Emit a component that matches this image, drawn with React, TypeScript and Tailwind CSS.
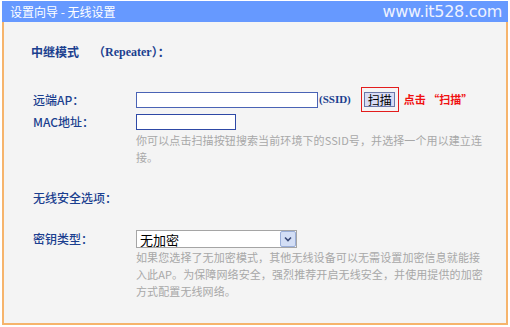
import { useState } from "react";

function App() {
  const [ssid, setSsid] = useState("");
  const [mac, setMac] = useState("");

  const label = "w-[103px] shrink-0 text-[12px] font-medium text-[#1b3f8f]";
  const help = "text-[11px] leading-[17px] text-[#a8a8a8] tracking-[0.1px]";

  return (
    <div className="w-[510px] h-[327px] bg-white pt-[1px] font-['Noto_Sans_CJK_SC',sans-serif]">
      <div className="ml-[2px] w-[506px]">
        <div className="h-[21px] bg-[#6699ff] flex items-center justify-between pl-[8px] pr-[6px]">
          <span className="text-[12px] text-white leading-none">设置向导 - 无线设置</span>
          <span className="text-[16px] text-[#eef2ff] leading-none font-['DejaVu_Sans',sans-serif] tracking-[-0.3px]">
            www.it528.com
          </span>
        </div>
        <div className="h-[303px] bg-[#f4f4f4] border-l-2 border-r-2 border-b-2 border-[#f6b46c] pl-[27px] pt-[22px]">
          <div className="flex items-center h-[16px] text-[12px] text-[#1b3f8f] font-semibold">
            <span className="w-[62px]">中继模式</span>
            <span>（</span>
            <span className="font-['Liberation_Serif',serif] text-[12px]">Repeater</span>
            <span>）：</span>
          </div>

          <div className="flex items-center h-[25px] mt-[27px] pl-[2px]">
            <span className={label}>远端AP：</span>
            <input
              value={ssid}
              onChange={(e) => setSsid(e.target.value)}
              className="w-[182px] h-[16px] bg-white border border-[#4a63b5] outline-none"
            />
            <span className="text-[11px] text-[#1b3f8f] font-semibold font-['Liberation_Serif',serif] ml-[1px]">(SSID)</span>
            <div className="ml-[10px] w-[38px] h-[25px] border border-[#e31c1c] flex items-center justify-center">
              <button className="w-[31px] h-[15px] bg-[#d9dcf4] border border-[#6b78a8] text-[12px] leading-none text-black flex items-center justify-center">
                扫描
              </button>
            </div>
            <span className="ml-[5px] text-[11px] font-bold text-[#f01010]">点击 “扫描”</span>
          </div>

          <div className="flex items-center h-[18px] mt-[1px] pl-[2px]">
            <span className={label}>MAC地址：</span>
            <input
              value={mac}
              onChange={(e) => setMac(e.target.value)}
              className="w-[100px] h-[16px] bg-white border border-[#2e49a6] outline-none"
            />
          </div>
          <div className={`${help} ml-[105px] mt-[1px] whitespace-nowrap`}>
            你可以点击扫描按钮搜索当前环境下的SSID号，并选择一个用以建立连
            <br />
            接。
          </div>

          <div className="flex items-center h-[16px] mt-[24px] pl-[2px]">
            <span className="text-[12px] font-medium text-[#1b3f8f]">无线安全选项：</span>
          </div>

          <div className="flex items-center h-[18px] mt-[24px] pl-[2px]">
            <span className={label}>密钥类型：</span>
            <div className="w-[161px] h-[18px] bg-white border border-[#a5a5a5] flex items-center">
              <span className="flex-1 pl-[3px] text-[13px] text-black leading-none">无加密</span>
              <div className="w-[16px] h-[16px] bg-[#d3def5] border border-[#9aaed8] rounded-[2px] flex items-center justify-center">
                <svg width="8" height="6" viewBox="0 0 8 6">
                  <path d="M1 1.5 L4 4.5 L7 1.5" fill="none" stroke="#3a4a78" strokeWidth="1.6" />
                </svg>
              </div>
            </div>
          </div>
          <div className={`${help} leading-[17.5px] ml-[105px] mt-[1px] whitespace-nowrap`}>
            如果您选择了无加密模式，其他无线设备可以无需设置加密信息就能接
            <br />
            入此AP。为保障网络安全，强烈推荐开启无线安全，并使用提供的加密
            <br />
            方式配置无线网络。
          </div>
        </div>
      </div>
    </div>
  );
}

export default App;
